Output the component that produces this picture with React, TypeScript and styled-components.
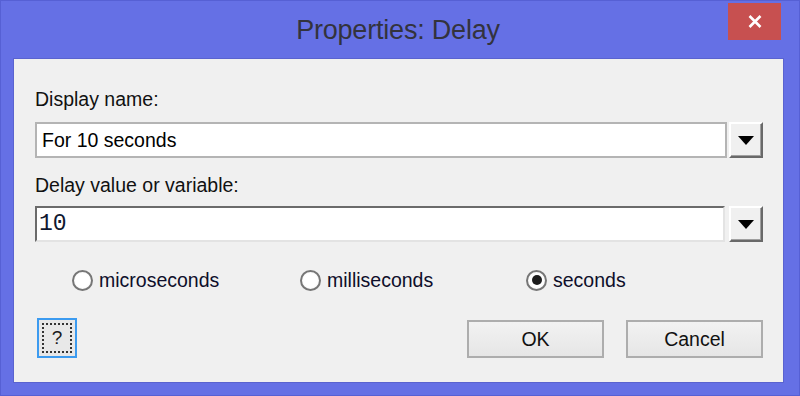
import styled, { createGlobalStyle } from "styled-components";

const GlobalStyle = createGlobalStyle`
  html, body {
    margin: 0;
    padding: 0;
    background: #6570e5;
  }
  body {
    font-family: "Liberation Sans", Arial, sans-serif;
  }
`;

const Window = styled.div`
  width: 800px;
  height: 396px;
  box-sizing: border-box;
  background: #6570e5;
  border: 1px solid #5660d4;
  display: flex;
  flex-direction: column;
`;

const TitleBar = styled.div`
  height: 58px;
  display: grid;
  grid-template-columns: 1fr auto 1fr;
  align-items: center;
`;

const Title = styled.div`
  grid-column: 2;
  font-size: 27px;
  color: #33333d;
  letter-spacing: -0.2px;
  padding: 1px 4px 0 0;
`;

const CloseButton = styled.button`
  grid-column: 3;
  justify-self: end;
  align-self: start;
  margin: 2px 18px 0 0;
  width: 53px;
  height: 37px;
  border: none;
  padding: 0;
  background: #c75050;
  display: flex;
  align-items: center;
  justify-content: center;
`;

const Client = styled.div`
  flex: 1;
  margin: 0 16px 13px 13px;
  background: #f0f0f0;
  box-shadow: 0 0 0 1px #5a63cf;
  padding: 29px 20px 0 21px;
  display: flex;
  flex-direction: column;
`;

const Label = styled.div<{ $gap: number; $top?: number }>`
  font-size: 19.5px;
  line-height: 22px;
  height: 22px;
  color: #111;
  margin-top: ${(p) => p.$top ?? 0}px;
  margin-bottom: ${(p) => p.$gap}px;
`;

const ComboRow = styled.div<{ $gap: number }>`
  display: flex;
  gap: ${(p) => p.$gap}px;
  height: 36px;
`;

const TextBox = styled.div<{ $sunken?: boolean; $mono?: boolean }>`
  flex: 1;
  box-sizing: border-box;
  background: #fff;
  display: flex;
  align-items: center;
  color: #000;
  ${(p) =>
    p.$sunken
      ? `border-top: 2px solid #6b6b6b;
         border-left: 2px solid #6b6b6b;
         border-bottom: 2px solid #e3e3e3;
         border-right: 2px solid #e3e3e3;
         padding-left: 2px;`
      : `border: 2px solid #b4b4b4;
         padding-left: 5px;`}
  ${(p) =>
    p.$mono
      ? `font-family: "Liberation Mono", "Courier New", monospace; font-size: 23px; color: #101830;`
      : `font-size: 19.5px;`}
`;

const DropButton = styled.button`
  width: 34px;
  height: 36px;
  box-sizing: border-box;
  padding: 0;
  background: #f0f0f0;
  border-top: 2px solid #ffffff;
  border-left: 2px solid #ffffff;
  border-right: 2px solid #696969;
  border-bottom: 2px solid #696969;
  box-shadow: inset -1px -1px 0 #a0a0a0;
  display: flex;
  align-items: center;
  justify-content: center;
`;

const RadioRow = styled.div`
  display: grid;
  grid-template-columns: 228px 226px auto;
  padding-left: 37px;
  margin-top: 26px;
  height: 24px;
  align-items: center;
`;

const RadioItem = styled.label`
  display: flex;
  align-items: center;
  gap: 6px;
  font-size: 19.5px;
  color: #0e0e2a;
`;

const RadioCircle = styled.span<{ $checked?: boolean }>`
  width: 21px;
  height: 21px;
  box-sizing: border-box;
  border-radius: 50%;
  border: 2px solid #767676;
  background: radial-gradient(circle, #ffffff 55%, #ececec 100%);
  display: flex;
  align-items: center;
  justify-content: center;
  &::after {
    content: "";
    display: ${(p) => (p.$checked ? "block" : "none")};
    width: 10px;
    height: 10px;
    border-radius: 50%;
    background: #1c1c1c;
  }
`;

const ButtonRow = styled.div`
  display: flex;
  align-items: flex-start;
  margin-top: 28px;
`;

const HelpButton = styled.button`
  width: 40px;
  height: 40px;
  margin: -2px 0 0 2px;
  box-sizing: border-box;
  padding: 3px;
  border: 2px solid #3c9bf0;
  background: #e8e8e8;
  display: flex;
`;

const FocusRect = styled.span`
  flex: 1;
  border: 2px dotted #333;
  display: flex;
  align-items: center;
  justify-content: center;
  font-size: 19px;
  color: #1a1a1a;
  font-family: "Liberation Sans", Arial, sans-serif;
`;

const Spacer = styled.div`
  flex: 1;
`;

const PushButton = styled.button<{ $left?: number }>`
  width: 137px;
  height: 38px;
  margin-left: ${(p) => p.$left ?? 0}px;
  box-sizing: border-box;
  border: 2px solid #adadad;
  background: linear-gradient(#f2f2f2, #e6e6e6);
  font-family: "Liberation Sans", Arial, sans-serif;
  font-size: 19.5px;
  color: #111;
  padding: 0;
`;

const Arrow = () => (
  <svg width="16" height="9" viewBox="0 0 16 9">
    <path d="M0 0 H16 L8 9 Z" fill="#000" />
  </svg>
);

export default function App() {
  return (
    <>
      <GlobalStyle />
      <Window>
        <TitleBar>
          <Title>Properties: Delay</Title>
          <CloseButton>
            <svg width="14" height="13" viewBox="0 0 14 13">
              <path d="M1.5 1 L12.5 12 M12.5 1 L1.5 12" stroke="#fff" strokeWidth="2.6" />
            </svg>
          </CloseButton>
        </TitleBar>
        <Client>
          <Label $gap={12}>Display name:</Label>
          <ComboRow $gap={2}>
            <TextBox>For 10 seconds</TextBox>
            <DropButton>
              <Arrow />
            </DropButton>
          </ComboRow>
          <Label $gap={10} $top={16}>
            Delay value or variable:
          </Label>
          <ComboRow $gap={4}>
            <TextBox $sunken $mono>
              10
            </TextBox>
            <DropButton>
              <Arrow />
            </DropButton>
          </ComboRow>
          <RadioRow>
            <RadioItem>
              <RadioCircle />
              microseconds
            </RadioItem>
            <RadioItem>
              <RadioCircle />
              milliseconds
            </RadioItem>
            <RadioItem>
              <RadioCircle $checked />
              seconds
            </RadioItem>
          </RadioRow>
          <ButtonRow>
            <HelpButton>
              <FocusRect>?</FocusRect>
            </HelpButton>
            <Spacer />
            <PushButton>OK</PushButton>
            <PushButton $left={22}>Cancel</PushButton>
          </ButtonRow>
        </Client>
      </Window>
    </>
  );
}
